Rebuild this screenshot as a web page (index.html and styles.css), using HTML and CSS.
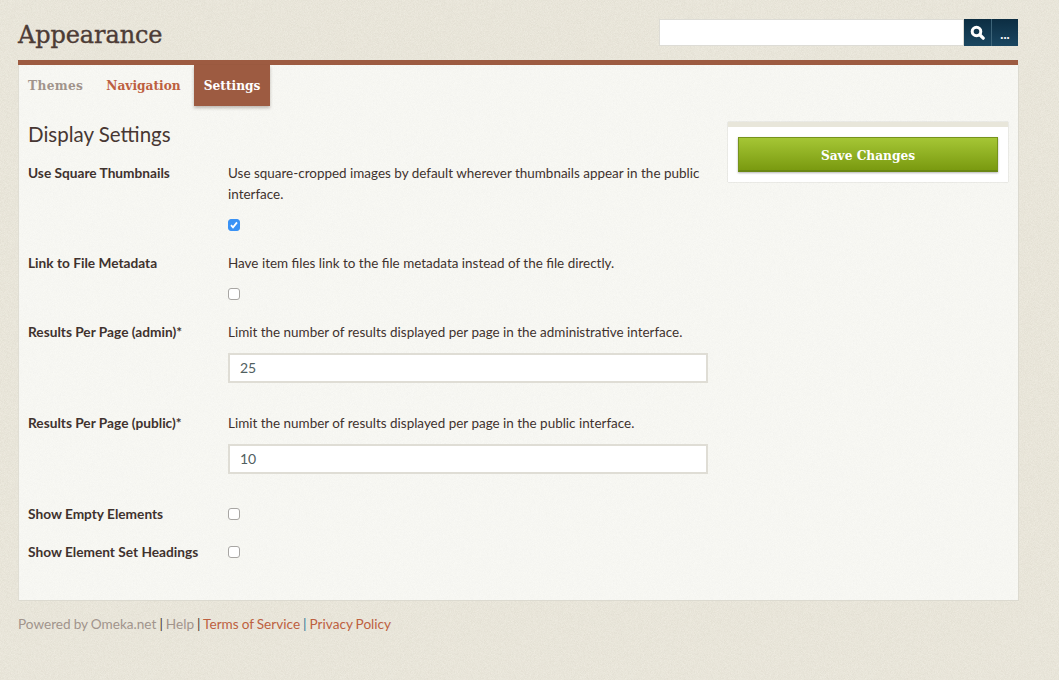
FILE: index.html
```html
<!DOCTYPE html>
<html lang="en">
<head>
<meta charset="utf-8">
<title>Appearance</title>
<link rel="stylesheet" href="styles.css">
</head>
<body>
<header class="top">
  <h1 class="title">Appearance</h1>
  <form class="search">
    <input class="search-input" type="text" aria-label="Search">
    <button class="search-btn" type="button" aria-label="Search">
      <svg width="15" height="15" viewBox="0 0 15 15"><circle cx="6.5" cy="6.5" r="4.3" fill="none" stroke="#fff" stroke-width="3"/><path d="M10 10l3.2 3.2" stroke="#fff" stroke-width="3.2" stroke-linecap="round"/></svg>
    </button>
    <button class="search-btn more" type="button">...</button>
  </form>
</header>
<div class="rule"></div>
<main class="panel">
  <nav class="tabs">
    <a class="tab muted">Themes</a>
    <a class="tab link">Navigation</a>
    <a class="tab active">Settings</a>
  </nav>
  <div class="columns">
    <section class="settings">
      <h2 class="heading">Display Settings</h2>
      <div class="row row-check">
        <label class="label">Use Square Thumbnails</label>
        <div class="field">
          <p class="explain">Use square-cropped images by default wherever thumbnails appear in the public interface.</p>
          <input class="check" type="checkbox" checked>
        </div>
      </div>
      <div class="row row-check">
        <label class="label">Link to File Metadata</label>
        <div class="field">
          <p class="explain">Have item files link to the file metadata instead of the file directly.</p>
          <input class="check" type="checkbox">
        </div>
      </div>
      <div class="row row-text">
        <label class="label">Results Per Page (admin)*</label>
        <div class="field">
          <p class="explain tight">Limit the number of results displayed per page in the administrative interface.</p>
          <input class="text" type="text" value="25">
        </div>
      </div>
      <div class="row row-text">
        <label class="label">Results Per Page (public)*</label>
        <div class="field">
          <p class="explain tight">Limit the number of results displayed per page in the public interface.</p>
          <input class="text" type="text" value="10">
        </div>
      </div>
      <div class="row row-single">
        <label class="label">Show Empty Elements</label>
        <div class="field"><input class="check" type="checkbox"></div>
      </div>
      <div class="row row-single">
        <label class="label">Show Element Set Headings</label>
        <div class="field"><input class="check" type="checkbox"></div>
      </div>
    </section>
    <aside class="save">
      <button class="save-btn" type="button">Save Changes</button>
    </aside>
  </div>
</main>
<footer class="foot">
  <a class="muted-link">Powered by Omeka.net</a> | <a class="muted-link">Help</a> | <a class="foot-link">Terms of Service</a> <span class="blue-sep">|</span> <a class="foot-link">Privacy Policy</a>
</footer>
</body>
</html>
```
FILE: styles.css
```css
* { box-sizing: border-box; }
html, body { height: 100%; }
body {
  margin: 0;
  padding: 0 40px 0 18px;
  overflow: hidden;
  background-color: #eeebe0;
  background-image: url("data:image/svg+xml,%3Csvg xmlns='http://www.w3.org/2000/svg' width='240' height='240'%3E%3Cfilter id='n'%3E%3CfeTurbulence type='fractalNoise' baseFrequency='1.3' numOctaves='2'/%3E%3CfeColorMatrix values='0 0 0 0 .45 0 0 0 0 .42 0 0 0 0 .33 0 0 0 .3 -.05'/%3E%3C/filter%3E%3Crect width='240' height='240' filter='url(%23n)'/%3E%3C/svg%3E");
  font-family: "Lato", "Open Sans", sans-serif;
  font-size: 14px;
  line-height: 21px;
  color: #3f322e;
}
.top {
  display: flex;
  justify-content: space-between;
  height: 60px;
  padding: 19px 1px 0 0;
}
.title {
  margin: 0;
  font-family: "DejaVu Serif", serif;
  font-size: 24px;
  font-weight: 400;
  line-height: 32px;
  letter-spacing: -.1px;
  color: #4d3c36;
  -webkit-text-stroke: .35px #4d3c36;
}
.search { display: flex; height: 27px; margin: 0; }
.search-input {
  width: 305px;
  height: 27px;
  border: 1px solid #dddcd6;
  background: #fff;
  padding: 0 6px;
}
.search-btn {
  width: 27px;
  height: 27px;
  margin: 0;
  padding: 0;
  border: 0;
  background: linear-gradient(#0c2d42, #1a4660);
  display: flex;
  align-items: center;
  justify-content: center;
}
.more {
  border-left: 1px solid #3d6478;
  color: #fff;
  font: 700 13px/1 "Lato", sans-serif;
  padding-top: 3px;
}
.rule { height: 5px; margin-right: 1px; background: #9d5b41; }
.panel {
  height: 536px;
  border-right: 1px solid #dcdad0;
  border-bottom: 1px solid #dcdad0;
  border-left: 1px solid #e0ded4;
  background-color: #f9f9f5;
  background-image: url("data:image/svg+xml,%3Csvg xmlns='http://www.w3.org/2000/svg' width='240' height='240'%3E%3Cfilter id='n'%3E%3CfeTurbulence type='fractalNoise' baseFrequency='1.3' numOctaves='2'/%3E%3CfeColorMatrix values='0 0 0 0 .5 0 0 0 0 .5 0 0 0 0 .4 0 0 0 .14 -.03'/%3E%3C/filter%3E%3Crect width='240' height='240' filter='url(%23n)'/%3E%3C/svg%3E");
}
.tabs { display: flex; height: 41px; }
.tab {
  font-family: "DejaVu Serif", serif;
  font-size: 12.2px;
  font-weight: 700;
  line-height: 42px;
  height: 41px;
  padding: 0 10px;
  margin-right: 3px;
}
.muted { color: #a1948c; padding-left: 9px; letter-spacing: .35px; }
.link { color: #bd6040; }
.active {
  padding-right: 10px;
  color: #fff;
  background: #9d5b41;
  box-shadow: 0 2px 3px rgba(60, 40, 30, .3);
}
.columns { display: flex; padding: 15px 9px 0; }
.settings { width: 680px; }
.heading {
  margin: 0 0 15px;
  font-size: 20.5px;
  font-weight: 400;
  line-height: 27px;
  color: #473732;
}
.row { display: flex; }
.label { width: 200px; flex: none; margin-top: -1px; font-weight: 700; font-size: 13.7px; }
.field { width: 480px; }
.explain { margin: 0 0 14px; font-size: 13.46px; }
.tight { margin-bottom: 10px; }
.row-check { padding-bottom: 22px; }
.row-text { padding-bottom: 30px; }
.row-single { height: 38px; }
.check {
  appearance: none;
  display: block;
  width: 12px;
  height: 12px;
  margin: 0;
  border: 1px solid #a8a6a3;
  border-radius: 3px;
  background: #fff;
}
.check:checked {
  border-color: #3a92f5;
  background: #3a92f5 url("data:image/svg+xml,%3Csvg xmlns='http://www.w3.org/2000/svg' width='10' height='10'%3E%3Cpath d='M2 5.2l2 2.2 4-5' fill='none' stroke='%23fff' stroke-width='1.8'/%3E%3C/svg%3E") center no-repeat;
}
.row-single .check { margin-top: 4px; }
.text {
  display: block;
  width: 480px;
  height: 30px;
  padding: 0 10px 2px;
  border: 2px solid #dfddd5;
  background: #fff;
  font: 14px "Lato", sans-serif;
  color: #51605f;
}
.save {
  width: 280px;
  height: 60px;
  margin: 1px 0 0 20px;
  padding: 10px 10px 0;
  background: #fff;
  border-top: 5px solid #e8e6da;
  box-shadow: 0 0 1px rgba(0, 0, 0, .3);
}
.save-btn {
  display: block;
  width: 260px;
  height: 35px;
  padding: 3px 0 0;
  border: 1px solid #76931c;
  border-bottom: 2px solid #6a8714;
  background: linear-gradient(#a5c635, #7a9a10);
  box-shadow: 0 1px 2px rgba(0, 0, 0, .3);
  color: #fff;
  font: 700 12.2px "DejaVu Serif", serif;
}
.foot { margin-top: 13px; font-size: 13.6px; word-spacing: -.45px; color: #473732; }
.muted-link { color: #a1948c; }
.foot-link { color: #bd6040; }
.blue-sep { color: #2c7b98; }
```
